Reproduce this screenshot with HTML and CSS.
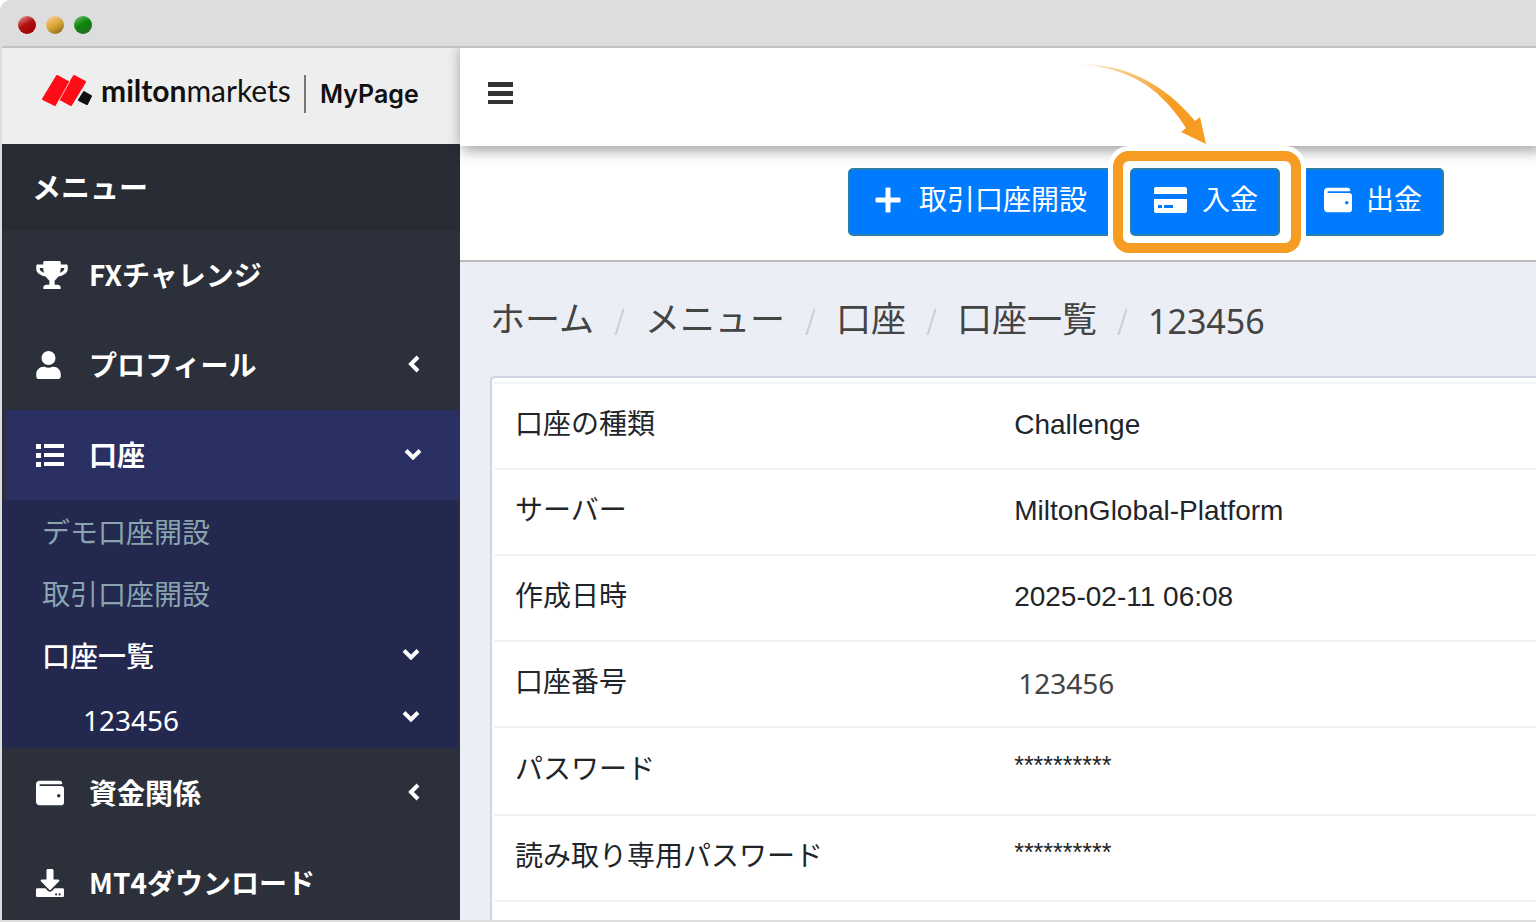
FILE: index.html
```html
<!DOCTYPE html>
<html lang="ja">
<head>
<meta charset="utf-8">
<meta name="viewport" content="width=device-width, initial-scale=1">
<title>MyPage</title>
<link rel="stylesheet" href="styles.css">
</head>
<body>
<svg class="sprite" aria-hidden="true">
  <symbol id="wallet" viewBox="0 0 512 512"><path d="M461 128H80a16 16 0 0 1 0-32h384c9 0 16-7 16-16 0-27-21-48-48-48H64C29 32 0 61 0 96v320c0 35 29 64 64 64h397c28 0 51-22 51-48V176c0-26-23-48-51-48zm-45 208a32 32 0 1 1 0-64 32 32 0 0 1 0 64z"/></symbol>
  <symbol id="down" viewBox="0 0 18 12"><path d="M2 2.5l7 7 7-7" fill="none" stroke="currentColor" stroke-width="4"/></symbol>
  <symbol id="left" viewBox="0 0 12 18"><path d="M10 2L3 9l7 7" fill="none" stroke="currentColor" stroke-width="4"/></symbol>
</svg>
<div class="window">
  <div class="titlebar"><span class="dot red"></span><span class="dot yellow"></span><span class="dot green"></span></div>
  <div class="app">
    <aside class="sidebar">
      <a class="brand" href="#">
        <svg class="brand-mark" viewBox="0 0 50 36" aria-hidden="true">
          <path d="M15 2l11 6-13 23-12-6z" fill="#ff0d17" stroke="#ff0d17" stroke-width="2" stroke-linejoin="round"/>
          <path d="M32 2l11 6-14 23-11-6z" fill="#ff0d17" stroke="#ff0d17" stroke-width="2" stroke-linejoin="round"/>
          <path d="M28 7L14 32" stroke="#eee" stroke-width="0.8"/>
          <path d="M42 18l7 4-4 8-8-4z" fill="#111" stroke="#111" stroke-width="2" stroke-linejoin="round"/>
        </svg>
        <span class="brand-name"><b>milton</b>markets</span>
        <span class="brand-page">MyPage</span>
      </a>
      <nav>
        <h2 class="menu-title">メニュー</h2>
        <a class="item" href="#">
          <svg class="icon trophy" viewBox="0 0 576 512"><path d="M552 64H448V24c0-13-11-24-24-24H152c-13 0-24 11-24 24v40H24C11 64 0 75 0 88v56c0 36 23 72 63 100 32 22 70 36 111 41 31 52 66 74 66 74v73h-48c-35 0-64 20-64 56v12c0 7 5 12 12 12h296c7 0 12-5 12-12v-12c0-36-29-56-64-56h-48v-73s35-22 66-74c41-5 79-19 111-41 40-28 63-64 63-100V88c0-13-11-24-24-24zM99 192c-25-18-35-36-35-48v-16h64c1 33 6 62 14 87-16-6-30-13-43-23zm413-48c0 16-18 36-35 48-13 10-28 17-43 23 8-25 13-54 14-87h64z"/></svg>
          <span>FXチャレンジ</span></a>
        <a class="item" href="#">
          <svg class="icon user" viewBox="0 0 448 512"><circle cx="224" cy="128" r="128"/><path d="M314 288h-17a174 174 0 0 1-146 0h-17C60 288 0 348 0 422v42c0 27 22 48 48 48h352c27 0 48-21 48-48v-42c0-74-60-134-134-134z"/></svg>
          <span>プロフィール</span><svg class="chev-left"><use href="#left"/></svg></a>
        <a class="item active" href="#">
          <svg class="icon" viewBox="0 0 28 28"><path d="M0 3h5v5H0zM0 12h5v5H0zM0 21h5v5H0zM8 3h20v4H8zM8 12h20v4H8zM8 21h20v4H8z"/></svg>
          <span>口座</span><svg class="chev-down"><use href="#down"/></svg></a>
        <div class="submenu">
          <a class="sub" href="#">デモ口座開設</a>
          <a class="sub" href="#">取引口座開設</a>
          <a class="sub open" href="#">口座一覧<svg class="chev-down"><use href="#down"/></svg></a>
          <a class="sub account" href="#"><span>123456</span><svg class="chev-down"><use href="#down"/></svg></a>
        </div>
        <a class="item" href="#"><svg class="icon"><use href="#wallet"/></svg><span>資金関係</span><svg class="chev-left"><use href="#left"/></svg></a>
        <a class="item" href="#">
          <svg class="icon" viewBox="0 0 512 512"><path d="M216 0h80c13 0 24 11 24 24v168h88c18 0 27 22 14 34L270 378c-8 8-20 8-28 0L90 226c-13-12-4-34 14-34h88V24c0-13 11-24 24-24zm296 376v112c0 13-11 24-24 24H24c-13 0-24-11-24-24V376c0-13 11-24 24-24h147l49 49c20 20 52 20 72 0l49-49h147c13 0 24 11 24 24zM388 464a20 20 0 1 0-40 0 20 20 0 0 0 40 0zm64 0a20 20 0 1 0-40 0 20 20 0 0 0 40 0z"/></svg>
          <span>MT4ダウンロード</span></a>
      </nav>
    </aside>
    <div class="main">
      <header class="topbar">
        <button class="burger" type="button" aria-label="メニュー"><svg viewBox="0 0 26 24"><path d="M0 1h25v5H0zM0 10h25v5H0zM0 19h25v4H0z"/></svg></button>
      </header>
      <div class="actions">
        <button class="btn open-account" type="button"><svg class="plus" viewBox="0 0 26 26"><path d="M11 1h4v10h10v4H15v10h-4V15H1v-4h10z" stroke="#fff" stroke-linejoin="round"/></svg>取引口座開設</button>
        <div class="spotlight">
          <button class="btn deposit" type="button"><svg class="card-icon" viewBox="0 0 34 26"><path d="M2 0h29q2 0 2 2v5H0V2q0-2 2-2zM0 12h33v12q0 2-2 2H2q-2 0-2-2zm4 6v3h4v-3zm6 0v3h9v-3z" fill-rule="evenodd"/></svg>入金</button>
          <svg class="arrow" viewBox="0 0 128 82" aria-hidden="true">
            <defs><linearGradient id="fade" x1="0" y1="0" x2="1" y2="1"><stop offset="0" stop-color="#f69c22" stop-opacity="0.1"/><stop offset="0.25" stop-color="#f69c22" stop-opacity="0.6"/><stop offset="0.6" stop-color="#f69c22"/></linearGradient></defs>
            <path d="M0 0C44 0 84 19 115 57l5-4 6 27-25-12 5-4C76 17 44 5 0 0z" fill="url(#fade)"/>
          </svg>
        </div>
        <button class="btn withdraw" type="button"><svg class="wallet-icon"><use href="#wallet"/></svg>出金</button>
      </div>
      <main class="content">
        <nav><ol class="crumbs">
          <li><a href="#">ホーム</a></li><li><a href="#">メニュー</a></li><li><a href="#">口座</a></li><li><a href="#">口座一覧</a></li><li><span class="number">123456</span></li>
        </ol></nav>
        <section class="card">
          <table class="details">
            <tr><th scope="row">口座の種類</th><td>Challenge</td></tr>
            <tr><th scope="row">サーバー</th><td>MiltonGlobal-Platform</td></tr>
            <tr><th scope="row">作成日時</th><td>2025-02-11 06:08</td></tr>
            <tr><th scope="row">口座番号</th><td class="number">123456</td></tr>
            <tr class="tall"><th scope="row">パスワード</th><td class="masked">**********</td></tr>
            <tr><th scope="row">読み取り専用パスワード</th><td class="masked">**********</td></tr>
            <tr><th></th><td></td></tr>
          </table>
        </section>
      </main>
    </div>
  </div>
</div>
</body>
</html>
```
FILE: styles.css
```css
* { box-sizing: border-box; }
body {
  margin: 0;
  background: #fff;
  font: 28px/40px "Liberation Sans", "Noto Sans CJK JP", sans-serif;
  color: #212529;
}
a { color: inherit; text-decoration: none; }
button { font: inherit; border: 0; cursor: pointer; }
svg { fill: currentColor; flex: none; }
.sprite { position: absolute; width: 0; height: 0; }

.window {
  height: 100vh;
  display: flex;
  flex-direction: column;
  overflow: hidden;
  border: solid #ddd;
  border-width: 0 0 2px 2px;
  border-top-left-radius: 10px;
}
.titlebar {
  flex: none;
  height: 48px;
  display: flex;
  align-items: center;
  gap: 10px;
  padding: 4px 16px 0;
  background: #ddd;
  border-bottom: 2px solid #c3c3c3;
}
.dot { width: 18px; height: 18px; border-radius: 50%; }
.red { background: linear-gradient(150deg, #d99 5%, #b51010 45%, #900 90%); }
.yellow { background: linear-gradient(150deg, #fc9 5%, #d9a835 50%, #86661c 95%); }
.green { background: linear-gradient(150deg, #6b6 5%, #0b870b 45%, #2a652a 95%); }
.app { flex: 1; min-height: 0; display: flex; }

.sidebar {
  flex: none;
  width: 458px;
  background: #2b303b;
  color: #fff;
  font-family: "Noto Sans CJK JP", sans-serif;
}
.brand {
  height: 96px;
  display: flex;
  align-items: center;
  padding: 0 0 8px 40px;
  background: #eee;
  color: #111;
}
.brand-mark { width: 50px; height: 36px; margin-right: 9px; }
.brand-name { width: 190px; font: 30px/32px Lato, sans-serif; padding-bottom: 4px; white-space: nowrap; }
.brand-name b { font-weight: 700; }
.brand-page {
  margin: 4px 0 0 13px;
  padding-left: 14px;
  border-left: 2px solid #777;
  font: 600 25px/38px Inter, sans-serif;
}
.menu-title {
  margin: 0;
  height: 86px;
  padding-left: 30px;
  background: #282c35;
  font-size: 29px;
  line-height: 84px;
}
.item {
  height: 90px;
  display: flex;
  align-items: center;
  padding: 0 36px 0 34px;
  font-weight: 700;
}
.item span { flex: 1; padding-bottom: 2px; line-height: 40px; }
.icon { width: 28px; height: 28px; margin-right: 25px; }
.trophy { width: 32px; margin-right: 21px; }
.user { width: 25px; margin-right: 28px; }
.chev-left { width: 12px; height: 18px; margin: 0 4px 2px; }
.chev-down { width: 18px; height: 12px; margin: 0 2px 2px 0; }
.active { margin-left: 4px; padding-left: 30px; background: #2b3062; }
.submenu { margin-right: 2px; background: #23284f; }
.sub {
  height: 62px;
  display: flex;
  align-items: center;
  justify-content: space-between;
  padding: 0 36px 0 40px;
  color: #8aa4af;
}
.open { color: #fff; font-weight: 500; }
.account { padding-left: 81px; color: #fff; font-family: "Noto Sans", sans-serif; }
.account span { padding-top: 6px; }

.main { flex: 1; min-width: 0; display: flex; flex-direction: column; background: #ebeef4; }
.topbar {
  position: relative;
  flex: none;
  height: 98px;
  display: flex;
  align-items: center;
  padding: 0 28px 8px;
  background: #fff;
  box-shadow: 4px 2px 14px 2px rgba(0, 0, 0, 0.4);
  clip-path: inset(0 0 -24px -20px);
}
.burger { padding: 0; background: none; color: #333; line-height: 0; }
.burger svg { width: 26px; height: 24px; }
.actions {
  flex: none;
  display: flex;
  justify-content: flex-end;
  padding: 22px 92px 24px 0;
  background: #fff;
  border-bottom: 2px solid #bbb;
}
.btn {
  height: 68px;
  display: flex;
  align-items: center;
  padding: 0 20px 8px 25px;
  background: #007bff;
  border: 2px solid #2a7ea8;
  border-radius: 5px;
  color: #fff;
  font-family: "Noto Sans CJK JP", sans-serif;
  white-space: nowrap;
}
.btn svg { margin-top: 4px; }
.open-account { padding-right: 23px; }
.plus { width: 26px; height: 26px; margin-right: 18px; }
.deposit { padding-left: 22px; }
.card-icon { width: 34px; height: 26px; margin-right: 14px; }
.withdraw { padding-left: 20px; }
.wallet-icon { width: 28px; height: 28px; margin-right: 14px; }
.spotlight { position: relative; margin: 0 22px 0 18px; }
.spotlight::after {
  content: "";
  position: absolute;
  inset: -17px -21px -17px -17px;
  border: 10px solid #f69c22;
  border-radius: 16px;
  box-shadow: 0 0 0 5px #fff;
  pointer-events: none;
}
.arrow { position: absolute; z-index: 1; left: -50px; top: -104px; width: 128px; height: 82px; }

.content { padding: 30px 0 0 30px; font-family: "Noto Sans CJK JP", sans-serif; }
.crumbs {
  display: flex;
  height: 52px;
  margin: 0 0 32px;
  padding: 0;
  list-style: none;
  font-size: 35px;
  line-height: 50px;
  color: #444;
}
.crumbs li { display: flex; }
.crumbs li + li::before {
  content: "/";
  width: 51px;
  padding-top: 2px;
  text-align: center;
  font-size: 27px;
  color: #ccc;
}
.number { font-family: "Noto Sans", sans-serif; color: #444; }
.crumbs .number { font-size: 34px; padding-top: 4px; }
.card {
  padding: 4px 0 0 2px;
  background: #fff;
  border: solid #ced4e0;
  border-width: 2px 0 0 2px;
  border-top-left-radius: 5px;
}
.details { width: 100%; border-collapse: collapse; table-layout: fixed; }
.details th, .details td {
  height: 86px;
  padding: 0 0 4px 20px;
  border-top: 2px solid #f2f3f4;
  text-align: left;
  font-weight: 400;
}
.details th { width: 48%; padding: 0 0 8px 21px; white-space: nowrap; }
.details td { padding-bottom: 2px; font-family: "Liberation Sans", sans-serif; }
.details .number { padding: 0 0 2px 24px; font-family: "Noto Sans", sans-serif; }
.details .masked { padding-bottom: 12px; font-size: 25px; }
.details .tall th, .details .tall td { height: 88px; }
```
